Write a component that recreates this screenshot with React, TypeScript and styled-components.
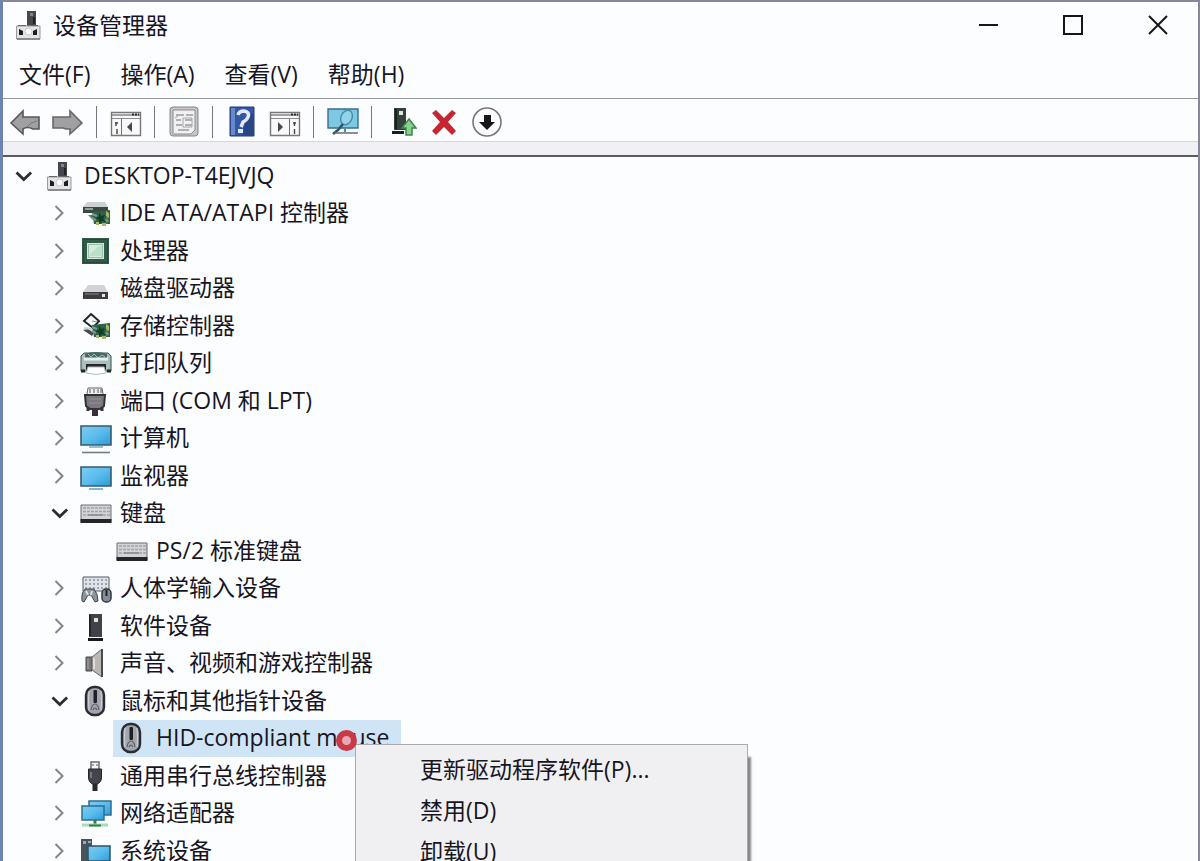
import React, { useState } from "react";
import styled, { createGlobalStyle } from "styled-components";

const GlobalStyle = createGlobalStyle`
  * { box-sizing: border-box; }
  body { margin: 0; background: #fcfdff; }
  button {
    border: 0;
    padding: 0;
    background: none;
    color: inherit;
    font: inherit;
    text-align: left;
    white-space: nowrap;
  }
  svg { display: block; flex: none; }
`;

const Window = styled.div`
  display: flex;
  flex-direction: column;
  height: 100vh;
  overflow: hidden;
  border: solid #85889a;
  border-width: 2px 2px 0 3px;
  border-left-color: #6d84ae;
  background: #fcfdff;
  color: #17151f;
  font-family: "Open Sans", "Noto Sans CJK SC", sans-serif;
  font-size: 23px;
  line-height: 32px;
`;

const TitleBar = styled.header`
  display: flex;
  align-items: center;
  flex: none;
  height: 46px;
  padding-left: 10px;
`;

const Title = styled.h1`
  flex: 1;
  margin: 0 0 0 8px;
  font-size: 23px;
  font-weight: 400;
`;

const WindowControls = styled.div`
  display: flex;
  gap: 5px;
`;

const ControlButton = styled.button`
  display: flex;
  align-items: center;
  justify-content: center;
  width: 80px;
  height: 46px;
`;

const MenuBar = styled.nav`
  display: flex;
  flex: none;
  gap: 30px;
  height: 51px;
  padding: 10px 16px 8px;
  border-bottom: 1px solid #92979b;
`;

const ToolBar = styled.div`
  display: flex;
  align-items: center;
  flex: none;
  height: 43px;
  padding-top: 4px;
  border-bottom: 1px solid #d3d6da;
`;

const ToolButton = styled.button`
  display: flex;
  align-items: center;
  justify-content: center;
  width: 43px;
  height: 38px;
`;

const Separator = styled.span`
  width: 1px;
  height: 32px;
  margin: 0 7px;
  background: #77777f;
`;

const Strip = styled.div`
  flex: none;
  height: 15px;
  border-bottom: 2px solid #5b5c60;
  background: #f1f0f4;
`;

const Tree = styled.ul`
  display: grid;
  grid-auto-rows: 37px 38px;
  margin: 0;
  padding: 0 0 0 9px;
  list-style: none;
`;

const Row = styled.li<{ $level: number }>`
  position: relative;
  display: flex;
  align-items: center;
  gap: 5px;
  padding-left: ${(p) => p.$level * 36}px;
`;

const Expander = styled.button`
  display: flex;
  align-items: center;
  justify-content: center;
  flex: none;
  width: 24px;
  height: 24px;
`;

const ExpanderSpace = styled.span`
  flex: none;
  width: 24px;
`;

const Item = styled.button<{ $selected?: boolean }>`
  display: flex;
  align-items: center;
  gap: 8px;
  height: 37px;
  padding: 0 12px 0 3px;
  background: ${(p) => (p.$selected ? "#cfe5f6" : "transparent")};
`;

const ItemLabel = styled.span`
  padding-bottom: 2px;
`;

const ContextMenu = styled.div`
  position: absolute;
  z-index: 1;
  top: 25px;
  left: 343px;
  width: 393px;
  padding: 3px 0;
  border: 1px solid #a9abaf;
  background: #f0f0f2;
  box-shadow: 4px 12px 2px -1px #85858a;
`;

const ContextItem = styled.button`
  display: block;
  width: 100%;
  height: 41px;
  padding-left: 64px;
`;

const ClickMarker = styled.span`
  position: absolute;
  z-index: 2;
  top: 11px;
  left: 324px;
  width: 21px;
  height: 21px;
  border: 6px solid #c83a46;
  border-radius: 50%;
  background: #e8a9b4;
`;

const Svg = ({ children, size = 32 }: { children: React.ReactNode; size?: number }) => (
  <svg width={size} height={size} viewBox="0 0 32 32" fill="none" aria-hidden="true">
    {children}
  </svg>
);

const Chevron = ({ open }: { open: boolean }) => (
  <svg width="24" height="24" viewBox="0 0 24 24" fill="none" aria-hidden="true">
    {open ? (
      <path d="M4.500 8.500l7.300 7 7.300-7" stroke="#2d2c33" strokeWidth="2.800" />
    ) : (
      <path d="M7.500 5l7 7-7 7" stroke="#85848c" strokeWidth="2" />
    )}
  </svg>
);

const CircuitCard = () => (
  <>
    <path d="M12 15l18-2v14H14z" fill="#2d6247" />
    <path d="M12 17l5 2M12 21l4 2" stroke="#7c9a8d" strokeWidth="2" />
    <path d="M19 15l2 4 4-1-2 4 3 3-4-1-3 3v-4l-4-2 4-1z" fill="#123c25" />
    <path d="M26 14l3 2v5l-3-2zM16 25h3v3h-3zM22 26h4v3h-4z" fill="#a9b965" />
    <path d="M25 23l4 1M27 20v6" stroke="#82ab8f" />
  </>
);

const MouseShape = () => (
  <>
    <rect x="6" y="2" width="18" height="28" rx="8" fill="#a3a6ac" stroke="#292c34" strokeWidth="2.4" />
    <path d="M9 6q-1 9 0 19M21 6q1 9 0 19" stroke="#d4d6da" />
    <rect x="13.5" y="5" width="3.5" height="13" rx="1" fill="#1e2026" />
    <path d="M11 25q1-6 4-6t4 6M13 25q2-4 4 0" stroke="#5a5d66" strokeWidth="1.2" />
  </>
);

const KeyboardShape = () => (
  <>
    <path d="M1 8h30v17H1z" fill="#d2d3d6" stroke="#6c6d72" />
    <path d="M3 11h27M3 14.5h27M3 18h27" stroke="#a2a3a9" strokeWidth="1.4" strokeDasharray="3 1" />
    <path d="M8 18h15" stroke="#85868b" strokeWidth="1.4" />
    <path d="M.5 22h31v4H.5z" fill="#25262b" />
  </>
);

const screenFill = (
  <linearGradient id="screen" x1="0" y1="0" x2="1" y2="1">
    <stop offset="0" stopColor="#7ccdf0" />
    <stop offset=".5" stopColor="#5cbcec" />
    <stop offset="1" stopColor="#2a9cdb" />
  </linearGradient>
);

const deviceIcons: Record<string, React.ReactNode> = {
  host: (
    <>
      <path d="M14 2h9v15h-9z" fill="#47464c" />
      <path d="M17 4h3v3h-3z" fill="#84838a" />
      <path d="M20 8h2v7h-2z" fill="#222127" />
      <path d="M3.500 17h23.500v13H3.500z" fill="#e4e4e5" stroke="#9a9a9d" />
      <path d="M5 16.500h8M19 16.500h6" stroke="#666" />
      <path d="M6 20l4 2v4H6zM20 22l4-2v6h-4z" fill="#1e1d22" />
      <circle cx="15.500" cy="22.500" r="3.500" fill="#fff" stroke="#c9c9cc" />
      <path d="M4 30h23" stroke="#77777c" strokeWidth="1.5" />
    </>
  ),
  ide: (
    <>
      <path d="M7 5h18l3 5H3z" fill="#ccd2d2" />
      <path d="M3 10h25v6H3z" fill="#3c4645" />
      <path d="M5 12h8" stroke="#87a19b" strokeWidth="2" />
      <path d="M8 18h9v5h-4z" fill="#58786a" />
      <CircuitCard />
    </>
  ),
  cpu: (
    <>
      <path d="M2 3h27v26H2z" fill="#315b46" />
      <path d="M3.500 4.500h24v23h-24z" stroke="#24422f" strokeDasharray="2 1" />
      <path d="M7 8h17v16H7z" fill="#d5eadc" />
      <path d="M8.500 9.500h14v13h-14z" stroke="#98bfa9" />
      <path d="M10 19l9-8h3v10H10z" fill="#bcdfca" />
    </>
  ),
  disk: (
    <>
      <path d="M8 13h16l4 7H3z" fill="#d3d3d5" />
      <path d="M3 20h25v7H3z" fill="#3c3b41" />
      <path d="M5 22h14" stroke="#6f6e74" strokeWidth="1.5" />
      <path d="M22 22h3v3h-3z" fill="#e7e7ea" />
    </>
  ),
  storage: (
    <>
      <path d="M11 4l8 7-6 7-9-7z" fill="#f7f8fa" stroke="#24252c" strokeWidth="2" />
      <path d="M12 11l5 1-4 4" stroke="#858992" />
      <path d="M3 20l9 6 2-3-6-4z" fill="#434b4c" />
      <path d="M4 18l7 1 4 4" stroke="#c7cccd" strokeWidth="2" />
      <CircuitCard />
    </>
  ),
  printer: (
    <>
      <path d="M1 9l3-3h24l3 3v15H1z" fill="#a9bfbc" stroke="#3c4948" />
      <path d="M5 7q11-4 22 0v5H5z" fill="#45685f" />
      <path d="M8 7l3 3 3-3 4 4 4-3 3 2" stroke="#a3c4b8" />
      <path d="M4 12h24" stroke="#e6eeed" strokeWidth="3" />
      <path d="M6 17h20v7H6z" fill="#24282a" />
      <path d="M8 20h16l2 6q-10 3-20 0z" fill="#fbfcfd" stroke="#b4bbbc" />
      <path d="M1 24h4M27 24h4" stroke="#202526" strokeWidth="3" />
    </>
  ),
  port: (
    <>
      <path d="M7 9l1-6h14l1 6" fill="#f0f0f1" stroke="#66656a" />
      <path d="M10 4v4M14 4v4M18 4v4M21 4v4" stroke="#55545b" />
      <path d="M5 10h20l-1 11-4 3H10l-4-3z" fill="#7b797e" stroke="#303036" strokeWidth="2" />
      <path d="M9 14h12M9 18h12" stroke="#939197" />
      <path d="M8 22v4M22 22v4" stroke="#35343a" strokeWidth="3" />
      <path d="M12 24h6v7h-6z" fill="#34333a" />
    </>
  ),
  computer: (
    <>
      <path d="M1 4h30v19H1z" fill="url(#screen)" stroke="#3b596c" strokeWidth="1.6" />
      <path d="M9 25h14" stroke="#78aac3" strokeWidth="1.5" />
      <path d="M2 30.500h28" stroke="#717d85" strokeWidth="1.6" />
    </>
  ),
  monitor: (
    <>
      <path d="M1 7h30v19H1z" fill="url(#screen)" stroke="#3b596c" strokeWidth="1.6" />
      <path d="M9 29h14" stroke="#65a6c6" strokeWidth="1.6" />
    </>
  ),
  keyboard: <KeyboardShape />,
  hid: (
    <>
      <path d="M3 5h26v14H3z" fill="#dfe3e7" stroke="#555d66" />
      <path d="M5 8h23M5 12h23M5 16h23" stroke="#8a929b" strokeWidth="1.5" strokeDasharray="2 2" />
      <path d="M2 29q-1-8 3-12h9q4 5 4 12l-3 1-4-7H8l-4 7z" fill="#8b949d" stroke="#3e4750" />
      <path d="M6 19l2 4M12 19l-1 4" stroke="#dde0e4" strokeWidth="2" />
      <rect x="22" y="17" width="9" height="13" rx="4" fill="#838d96" stroke="#303944" strokeWidth="1.500" />
      <path d="M26.500 18v6" stroke="#20252b" strokeWidth="2" />
    </>
  ),
  software: (
    <>
      <path d="M9 4h13v23H9z" fill="#414147" />
      <path d="M10 5v21" stroke="#232329" strokeWidth="2" />
      <path d="M14 8h4v4h-4z" fill="#dddde0" />
      <path d="M8 28h15v3H8z" fill="#18181c" />
    </>
  ),
  speaker: (
    <>
      <path d="M6 10h6v14H6z" fill="#77777a" stroke="#47474a" />
      <path d="M12 10l10-8v28L12 23z" fill="#b9b8b5" stroke="#66656a" />
      <path d="M14 11v11" stroke="#deddda" strokeWidth="2" />
      <path d="M22 2v28" stroke="#4b4a4e" strokeWidth="2" />
      <path d="M8 12v10" stroke="#aaa" />
    </>
  ),
  mouse: <MouseShape />,
  usb: (
    <>
      <path d="M11 9V2h8v7" fill="#f5f5f6" stroke="#6b6a70" strokeWidth="1.5" />
      <path d="M13 4v2M17 4v2" stroke="#55545a" />
      <path d="M8.500 9h13v9q0 4-4 6h-5q-4-2-4-6z" fill="#45444a" stroke="#252429" />
      <path d="M11 12v6" stroke="#77767e" strokeWidth="2" />
      <path d="M12.500 24h5v7h-5z" fill="#2a292e" />
    </>
  ),
  network: (
    <>
      <path d="M9 4h22v14H9z" fill="url(#screen)" stroke="#316d8f" strokeWidth="1.5" />
      <path d="M2 9h22v14H2z" fill="url(#screen)" stroke="#316d8f" strokeWidth="1.5" />
      <path d="M15 23v4" stroke="#367b56" strokeWidth="3" />
      <path d="M2 28h26" stroke="#a9dcaf" strokeWidth="3" />
      <path d="M9 28.500h12" stroke="#347849" strokeWidth="2" />
    </>
  ),
  system: (
    <>
      <path d="M1 4h11v24H1z" fill="#46545e" />
      <path d="M3 6h3v3H3zM8 6h3v2H8zM4 12h3" fill="#9daab2" />
      <path d="M8 11h22v15H8z" fill="url(#screen)" stroke="#2d5268" strokeWidth="1.5" />
      <path d="M12 29h14" stroke="#5c91ad" strokeWidth="1.5" />
    </>
  ),
};

const panelWindow = (
  <>
    <path d="M1.500 6.500h29v23h-29z" fill="#f8f8f9" stroke="#77777b" strokeWidth="1.4" />
    <path d="M2 9h28" stroke="#7d7d82" strokeWidth="1.4" />
    <path d="M2 12.500h28" stroke="#8b8b90" />
    <path d="M22 8.500h2M25 8.500h2M28 8.500h1" stroke="#303036" strokeWidth="2" />
  </>
);

type Tool = { label: string; icon: React.ReactNode } | null;

const tools: Tool[] = [
  {
    label: "后退",
    icon: (
      <>
        <path d="M2 17L14 5v6h16v12h-6q-6-3-10 0v5z" fill="#a0a0a2" stroke="#58585c" strokeWidth="1.600" />
        <path d="M18 21q3-5 10-6" stroke="#77777b" />
      </>
    ),
  },
  {
    label: "前进",
    icon: <path d="M30 17L18 5v6H1v11h10l3 1h4v5z" fill="#a0a0a2" stroke="#67676b" strokeWidth="1.600" />,
  },
  null,
  {
    label: "显示/隐藏控制台树",
    icon: (
      <>
        {panelWindow}
        <path d="M11.500 13v16" stroke="#6f6f75" />
        <path d="M6 16v4M7 23v5M5 17h3" stroke="#46464c" strokeWidth="1.400" />
        <path d="M22 16v10l-5-5z" fill="#46464c" />
      </>
    ),
  },
  null,
  {
    label: "属性",
    icon: (
      <>
        <rect x="2" y="1" width="28" height="29" rx="3" fill="#c6c6c8" stroke="#87878a" />
        <path d="M5 4h22v20l-4 4H5z" fill="#f1f1f2" stroke="#8b8b8e" />
        <path d="M8 9h8M18 9h7M8 14h5M17 14h7M8 19h6M17 19h7M10 24h11" stroke="#99999d" strokeWidth="1.500" />
        <path d="M7 12l3-2M15 12h9v9h-9z" stroke="#a5a5a9" />
      </>
    ),
  },
  null,
  {
    label: "帮助",
    icon: (
      <>
        <path d="M4 1h24v29H4z" fill="#3158a6" stroke="#25396c" />
        <path d="M5 2h4v27H5z" fill="#6889c9" />
        <path d="M21 8h6v21H17z" fill="#264584" />
        <path d="M12 9q1-4 6-4 6 1 4 6-1 3-5 5l-2 5" stroke="#e4eafa" strokeWidth="3.500" />
        <path d="M12 23h5v4h-5z" fill="#e4eafa" />
      </>
    ),
  },
  {
    label: "显示/隐藏操作窗格",
    icon: (
      <>
        {panelWindow}
        <path d="M20.500 13v16" stroke="#6f6f75" />
        <path d="M9 16v10l5-5z" fill="#46464c" />
        <path d="M25.500 16v4M25.500 23v5M24 17h3" stroke="#46464c" strokeWidth="1.400" />
      </>
    ),
  },
  null,
  {
    label: "扫描检测硬件改动",
    icon: (
      <>
        <path d="M1 3h30v19H1z" fill="#7ec8e3" stroke="#376f88" strokeWidth="1.400" />
        <ellipse cx="19.500" cy="11.500" rx="5.500" ry="7.500" transform="rotate(25 19.500 11.500)" fill="#92d3ea" stroke="#418caa" strokeWidth="1.400" />
        <path d="M16 18l-5 6-5 4" stroke="#35536a" strokeWidth="2.600" />
        <path d="M8 27h23" stroke="#6c7379" strokeWidth="1.600" />
        <path d="M18 22v4" stroke="#458fb0" strokeWidth="2" />
      </>
    ),
  },
  null,
  {
    label: "更新驱动程序软件",
    icon: (
      <>
        <path d="M9 2h12v22H9z" fill="#35413b" />
        <path d="M14 5h4v4h-4z" fill="#dce7df" />
        <path d="M11 3v20" stroke="#19231e" strokeWidth="2" />
        <path d="M7 25h12v3H7z" fill="#18201b" />
        <path d="M24 13l7 9h-4v7h-6v-7h-4z" fill="#8bd08f" stroke="#38884a" strokeWidth="1.500" />
      </>
    ),
  },
  {
    label: "卸载",
    icon: <path d="M4 7l4-3 8 8 8-8 4 3-8 9 8 9-4 4-8-8-8 8-4-4 8-9z" fill="#c62632" />,
  },
  {
    label: "禁用",
    icon: (
      <>
        <circle cx="16" cy="16" r="14" fill="#fcfcfd" stroke="#77757b" strokeWidth="1.600" />
        <path d="M13 9h7v7h4l-8 8-8-8h5z" fill="#171519" />
      </>
    ),
  },
];

type Node = { icon: string; label: string; level: number; open?: boolean; selected?: boolean };

const nodes: Node[] = [
  { icon: "host", label: "DESKTOP-T4EJVJQ", level: 0, open: true },
  { icon: "ide", label: "IDE ATA/ATAPI 控制器", level: 1, open: false },
  { icon: "cpu", label: "处理器", level: 1, open: false },
  { icon: "disk", label: "磁盘驱动器", level: 1, open: false },
  { icon: "storage", label: "存储控制器", level: 1, open: false },
  { icon: "printer", label: "打印队列", level: 1, open: false },
  { icon: "port", label: "端口 (COM 和 LPT)", level: 1, open: false },
  { icon: "computer", label: "计算机", level: 1, open: false },
  { icon: "monitor", label: "监视器", level: 1, open: false },
  { icon: "keyboard", label: "键盘", level: 1, open: true },
  { icon: "keyboard", label: "PS/2 标准键盘", level: 2 },
  { icon: "hid", label: "人体学输入设备", level: 1, open: false },
  { icon: "software", label: "软件设备", level: 1, open: false },
  { icon: "speaker", label: "声音、视频和游戏控制器", level: 1, open: false },
  { icon: "mouse", label: "鼠标和其他指针设备", level: 1, open: true },
  { icon: "mouse", label: "HID-compliant mouse", level: 2, selected: true },
  { icon: "usb", label: "通用串行总线控制器", level: 1, open: false },
  { icon: "network", label: "网络适配器", level: 1, open: false },
  { icon: "system", label: "系统设备", level: 1, open: false },
];

const menus = ["文件(F)", "操作(A)", "查看(V)", "帮助(H)"];
const actions = ["更新驱动程序软件(P)...", "禁用(D)", "卸载(U)"];

export default function App() {
  const [selected, setSelected] = useState("HID-compliant mouse");

  return (
    <Window>
      <GlobalStyle />
      <svg width="0" height="0" aria-hidden="true">
        <defs>{screenFill}</defs>
      </svg>
      <TitleBar>
        <Svg>{deviceIcons.host}</Svg>
        <Title>设备管理器</Title>
        <WindowControls>
          <ControlButton aria-label="最小化">
            <Svg>
              <path d="M7 16h19" stroke="#17151f" strokeWidth="2" />
            </Svg>
          </ControlButton>
          <ControlButton aria-label="最大化">
            <Svg>
              <path d="M7 7h18v18H7z" stroke="#17151f" strokeWidth="2" />
            </Svg>
          </ControlButton>
          <ControlButton aria-label="关闭">
            <Svg>
              <path d="M7 7l18 18M25 7L7 25" stroke="#17151f" strokeWidth="2" />
            </Svg>
          </ControlButton>
        </WindowControls>
      </TitleBar>
      <MenuBar>
        {menus.map((m) => (
          <button key={m}>{m}</button>
        ))}
      </MenuBar>
      <ToolBar role="toolbar">
        {tools.map((t, i) =>
          t ? (
            <ToolButton key={i} aria-label={t.label}>
              <Svg>{t.icon}</Svg>
            </ToolButton>
          ) : (
            <Separator key={i} />
          )
        )}
      </ToolBar>
      <Strip />
      <Tree role="tree">
        {nodes.map((n) => (
          <Row key={n.label} role="treeitem" aria-level={n.level + 1} aria-expanded={n.open} $level={n.level}>
            {n.open === undefined ? (
              <ExpanderSpace />
            ) : (
              <Expander aria-label={n.open ? "折叠" : "展开"}>
                <Chevron open={n.open} />
              </Expander>
            )}
            <Item $selected={n.label === selected} onClick={() => setSelected(n.label)}>
              <Svg>{deviceIcons[n.icon]}</Svg>
              <ItemLabel>{n.label}</ItemLabel>
            </Item>
            {n.selected && (
              <>
                <ContextMenu role="menu">
                  {actions.map((a) => (
                    <ContextItem key={a} role="menuitem">
                      {a}
                    </ContextItem>
                  ))}
                </ContextMenu>
                <ClickMarker />
              </>
            )}
          </Row>
        ))}
      </Tree>
    </Window>
  );
}
